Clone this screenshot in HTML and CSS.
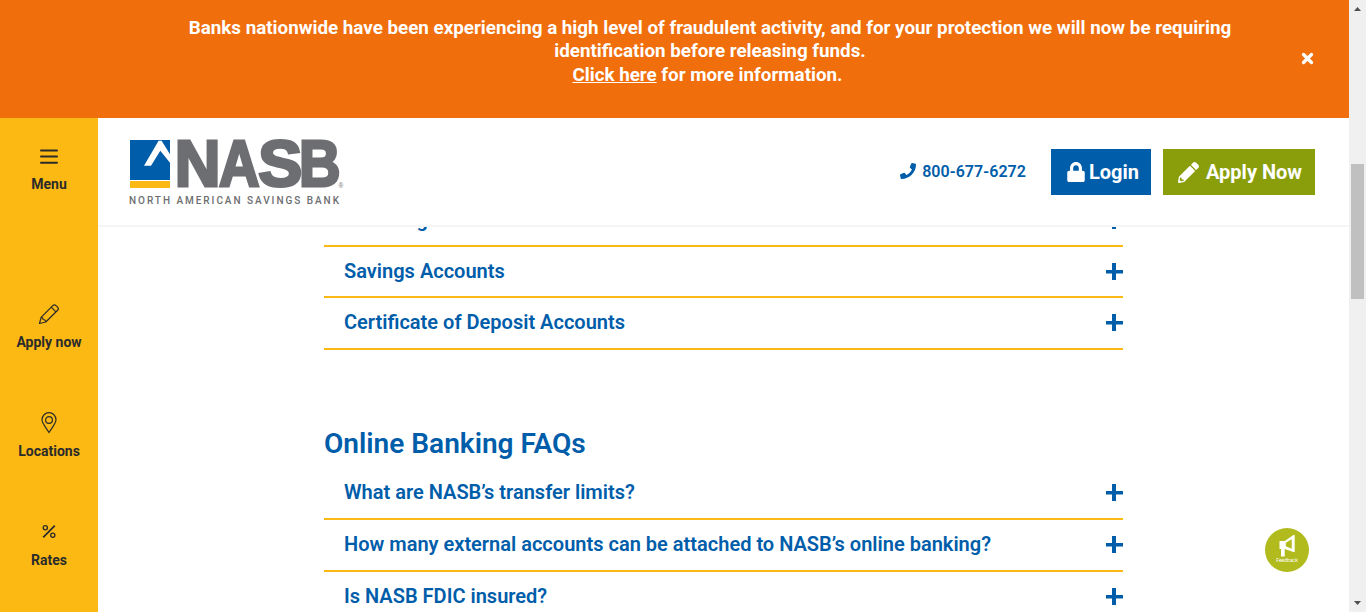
FILE: index.html
```html
<!DOCTYPE html>
<html lang="en">
<head>
<meta charset="utf-8">
<title>FAQs | NASB</title>
<link rel="stylesheet" href="styles.css">
</head>
<body>
<div class="page">
  <div class="alert">
    <h3 class="alert-text">Banks nationwide have been experiencing a high level of fraudulent activity, and for your protection we will now be requiring<br>identification before releasing funds.<br><span class="alert-more"><a href="#">Click here</a> for more information.</span></h3>
    <svg class="alert-close" width="13" height="13" viewBox="0 0 13 13"><path d="M2.500 2.500l8 8M10.500 2.500l-8 8" stroke="#fff" stroke-width="3.300" stroke-linecap="round"/></svg>
  </div>
  <div class="shell">
    <nav class="side">
      <a class="side-item menu"><svg width="20" height="20" viewBox="0 0 20 20"><path d="M2 3.500h16M2 9.500h16M2 15.800h16" stroke="#2b2b2b" stroke-width="2" stroke-linecap="round"/></svg><span>Menu</span></a>
      <a class="side-item"><svg width="22" height="22" viewBox="0 0 22 22" fill="none" stroke="#2b2b2b" stroke-width="1.200" stroke-linejoin="round"><path d="M1.500 20.500l1.600-6.200L14.800 2.600q1.600-1.600 3.200 0l1.600 1.600q1.500 1.500 0 3.100L7.800 19z"/><path d="M3.100 14.300q2 .1 2.100 2.200 2.300.1 2.600 2.500M13.200 4.200l4.700 4.700"/></svg><span>Apply now</span></a>
      <a class="side-item"><svg width="22" height="22" viewBox="0 0 22 22" fill="none" stroke="#2b2b2b" stroke-width="1.200"><path d="M11 20.500C7.500 15 4 11 4 7.700a7 7 0 0 1 14 0C18 11 14.500 15 11 20.500z"/><circle cx="11" cy="8" r="3.400"/></svg><span>Locations</span></a>
      <a class="side-item"><svg width="22" height="22" viewBox="0 0 22 22" fill="none" stroke="#2b2b2b" stroke-width="1.300"><circle cx="7.300" cy="6.800" r="2.100"/><circle cx="14.800" cy="14.300" r="2.100"/><path d="M16.800 4.600L5.200 16.300" stroke-width="1.700"/></svg><span>Rates</span></a>
    </nav>
    <div class="main">
      <header class="header">
        <svg class="logo" width="216" height="70" viewBox="0 0 216 70">
          <path d="M0 4h40v40H0z" fill="#005daa"/>
          <path d="M0 45h40v7H0z" fill="#fdb913"/>
          <path d="M14 29.700L28.600 4.700h3L40 18.300v8.400L30.300 14.700 21 29.700z" fill="#fff"/>
          <g class="logo-name">
            <text x="44.800" y="50.200" textLength="45.700" lengthAdjust="spacingAndGlyphs">N</text>
            <text x="89" y="50.200" textLength="40.500" lengthAdjust="spacingAndGlyphs">A</text>
            <text x="128.300" y="50.200" textLength="44" lengthAdjust="spacingAndGlyphs">S</text>
            <text x="169" y="50.200" textLength="41.500" lengthAdjust="spacingAndGlyphs">B</text>
          </g>
          <text class="logo-reg" x="208.500" y="52">®</text>
          <text class="logo-sub" x="-1" y="68" textLength="210">NORTH AMERICAN SAVINGS BANK</text>
        </svg>
        <div class="actions">
          <a class="phone"><svg width="16" height="16" viewBox="0 0 512 512"><path fill="currentColor" d="M493.400 24.600l-104-24c-11.300-2.600-22.900 3.300-27.500 13.900l-48 112c-4.200 9.800-1.400 21.300 6.900 28l60.600 49.600c-36 76.700-98.900 140.500-177.200 177.200l-49.600-60.600c-6.800-8.300-18.200-11.100-28-6.900l-112 48C3.900 366.500-2 378.100.6 389.400l24 104C27.100 504.200 36.700 512 48 512c256.100 0 464-207.500 464-464 0-11.200-7.700-20.900-18.600-23.400z"/></svg>800-677-6272</a>
          <a class="btn login"><svg width="18" height="20" viewBox="0 0 448 512"><path fill="#fff" d="M400 224h-24v-72C376 68.200 307.800 0 224 0S72 68.200 72 152v72H48c-26.500 0-48 21.500-48 48v192c0 26.500 21.500 48 48 48h352c26.500 0 48-21.500 48-48V272c0-26.500-21.500-48-48-48zm-104 0H152v-72c0-39.700 32.300-72 72-72s72 32.300 72 72v72z"/></svg>Login</a>
          <a class="btn apply"><svg width="21" height="21" viewBox="0 0 512 512"><path fill="#fff" d="M497.900 142.100l-46.100 46.100c-4.700 4.700-12.300 4.700-17 0l-111-111c-4.700-4.700-4.700-12.300 0-17l46.100-46.100c18.700-18.700 49.100-18.700 67.900 0l60.100 60.100c18.800 18.700 18.800 49.100 0 67.900zM284.200 99.800L21.600 362.400.4 483.900c-2.900 16.400 11.400 30.600 27.800 27.800l121.500-21.300 262.600-262.600c4.700-4.700 4.700-12.300 0-17l-111-111c-4.800-4.700-12.400-4.700-17.100 0zM88 424h48v36.300l-64.500 11.300-31.100-31.100L51.700 376H88v48z"/></svg>Apply Now</a>
        </div>
      </header>
      <div class="content">
        <section class="faq faq-accounts">
          <div class="row"><span>Checking Accounts</span><i class="plus"></i></div>
          <div class="row"><span>Savings Accounts</span><i class="plus"></i></div>
          <div class="row"><span>Certificate of Deposit Accounts</span><i class="plus"></i></div>
        </section>
        <section class="faq faq-online">
          <h2>Online Banking FAQs</h2>
          <div class="row"><span>What are NASB’s transfer limits?</span><i class="plus"></i></div>
          <div class="row"><span>How many external accounts can be attached to NASB’s online banking?</span><i class="plus"></i></div>
          <div class="row"><span>Is NASB FDIC insured?</span><i class="plus"></i></div>
        </section>
      </div>
    </div>
  </div>
</div>
<div class="scrollbar">
  <svg width="17" height="17" viewBox="0 0 17 17"><path d="M5 11l3.500-4 3.500 4z" fill="#505050"/></svg>
  <div class="track"><div class="thumb"></div></div>
  <svg width="17" height="17" viewBox="0 0 17 17"><path d="M5 6l3.500 4L12 6z" fill="#505050"/></svg>
</div>
<a class="feedback"><svg width="18" height="22" viewBox="0 0 18 22"><path d="M1.500 6h5.200L15.500 0h1.200v17h-1.200l-8.800-3v7.500H3V14H1.500z" fill="#fff"/><path d="M7.800 7.800l5.900-3.600v9.600l-5.900-2.600z" fill="#b1bb1e"/></svg><span>Feedback</span></a>
</body>
</html>
```
FILE: styles.css
```css
* { box-sizing: border-box; }
body {
  margin: 0;
  height: 612px;
  display: flex;
  overflow: hidden;
  background: #fff;
  font-family: Roboto, "Liberation Sans", sans-serif;
}
.page { width: 1349px; display: flex; flex-direction: column; }
.alert {
  height: 118px;
  flex: none;
  display: flex;
  align-items: center;
  background: #f06e0c;
  color: #fff;
  padding: 0 35px 0 119px;
}
.alert-text {
  flex: 1;
  margin: 0 0 14px;
  font-size: 18.8px;
  line-height: 23.5px;
  font-weight: 700;
  text-align: center;
  white-space: nowrap;
}
.alert-text a { color: #fff; }
.alert-more { padding-right: 5px; }
.alert-close { margin-bottom: 1px; }
.shell { flex: 1; display: flex; min-height: 0; }
.side {
  width: 98px;
  background: #fdb913;
  display: flex;
  flex-direction: column;
  padding-top: 29px;
  overflow: hidden;
}
.side-item {
  flex: none;
  height: 109px;
  display: flex;
  flex-direction: column;
  align-items: center;
  gap: 8px;
  color: #2b2b2b;
  font-size: 14px;
  line-height: 18px;
  font-weight: 700;
}
.menu { height: 156px; }
.main { flex: 1; display: flex; flex-direction: column; min-width: 0; }
.header {
  height: 109px;
  flex: none;
  display: flex;
  justify-content: space-between;
  padding: 18px 34px 0 32px;
  border-bottom: 2px solid #f6f6f6;
}
.logo { overflow: visible; }
.logo-name {
  font: 700 64.5px "Liberation Sans", Arial, sans-serif;
  fill: #6d6e71;
  stroke: #6d6e71;
  stroke-width: 3px;
}
.logo-reg { font: 6.5px "Liberation Sans", sans-serif; fill: #6d6e71; }
.logo-sub {
  font: 500 10px Roboto, sans-serif;
  fill: #6d6e71;
}
.actions { display: flex; height: 46px; margin-top: 13px; align-items: center; }
.phone {
  display: flex;
  align-items: center;
  gap: 6px;
  margin: 0 25px 2px 0;
  color: #005daa;
  font-size: 16px;
  font-weight: 600;
  letter-spacing: 0.06px;
}
.btn {
  height: 46px;
  display: flex;
  align-items: center;
  color: #fff;
  font-size: 20px;
  font-weight: 700;
}
.login { width: 100px; background: #005daa; padding-left: 16px; gap: 4px; margin-right: 12px; }
.apply { width: 152px; background: #8a9e0b; padding-left: 15px; gap: 7px; }
.content { flex: 1; overflow: hidden; padding-left: 226px; }
.faq { width: 799px; color: #005daa; }
.faq-accounts { margin-top: -31px; margin-bottom: 75px; }
.faq h2 { margin: 0; height: 43px; font-size: 28.05px; line-height: 38px; font-weight: 600; }
.row {
  height: 51px;
  display: flex;
  align-items: center;
  justify-content: space-between;
  padding-left: 20px;
  border-bottom: 2px solid #fdb913;
  font-size: 20.02px;
  line-height: 25px;
  font-weight: 600;
}
.faq-accounts .row:last-child { height: 52px; padding-bottom: 1px; }
.faq-online .row { height: 52px; padding-bottom: 1px; }
.plus {
  width: 18px;
  height: 17px;
  background:
    linear-gradient(#005daa, #005daa) center / 17px 3.5px no-repeat,
    linear-gradient(#005daa, #005daa) center / 4px 17px no-repeat;
}
.scrollbar { width: 17px; background: #f0f0f0; display: flex; flex-direction: column; }
.scrollbar svg { flex: none; }
.track { flex: 1; padding: 147px 2px 0; }
.thumb { height: 135px; background: #c0c0c0; }
.feedback {
  position: fixed;
  left: 1265px;
  top: 528px;
  width: 44px;
  height: 44px;
  border-radius: 50%;
  background: #b1bb1e;
  display: flex;
  flex-direction: column;
  align-items: center;
  padding-top: 7px;
  color: #fff;
  font-size: 5px;
  line-height: 6px;
}
```
